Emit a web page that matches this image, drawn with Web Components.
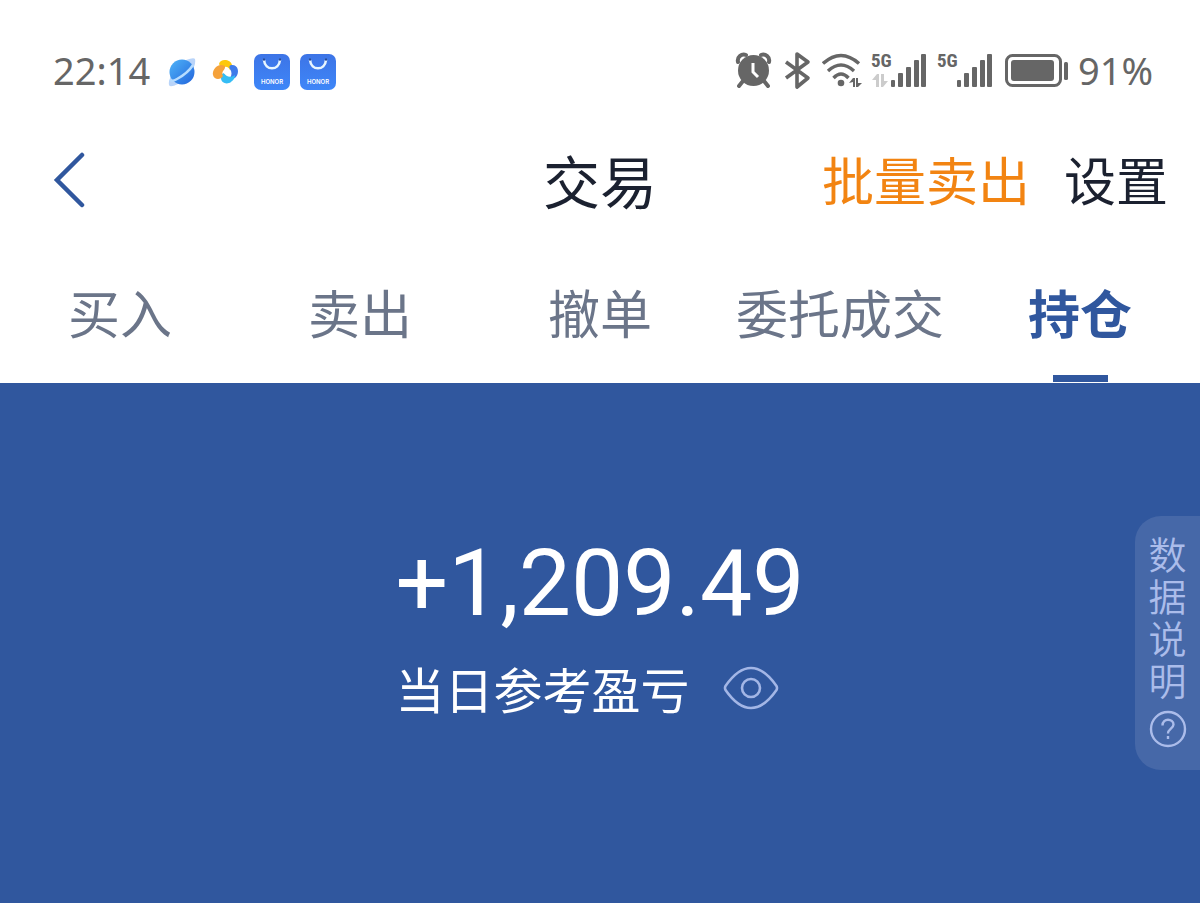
<!DOCTYPE html>
<html lang="zh-CN">
<head>
<meta charset="utf-8">
<meta name="viewport" content="width=device-width, initial-scale=1">
<title>交易</title>
<style>
  body {
    margin: 0;
    background: #fff;
    font-family: "Noto Sans CJK SC", sans-serif;
  }
</style>
</head>
<body>
<trade-page></trade-page>

<script>
class SignalBars extends HTMLElement {
  constructor() {
    super();
    this.attachShadow({ mode: "open" });
  }

  // small up/down arrows under the network label
  get arrows() {
    if (!this.hasAttribute("data")) {
      return "";
    }
    return `<path fill="#ccc" d="M1 34 6 28h2v13H5v-7zM10 28h3v7h4l-5 6h-2z"/>`;
  }

  connectedCallback() {
    this.shadowRoot.innerHTML = /* html */`
      <style>
        :host { display: block; }
        svg { display: block; }
        text { font: bold 19px "Liberation Sans Narrow", "Roboto Condensed", Roboto, sans-serif; }
      </style>
      <svg width="57" height="48" viewBox="0 0 57 48" fill="#666">
        <text x="0" y="21">5G</text>
        ${this.arrows}
        <rect x="20" y="34" width="4" height="7" rx="1"/>
        <rect x="27" y="27" width="5" height="14" rx="1"/>
        <rect x="35" y="21" width="5" height="20" rx="1"/>
        <rect x="43" y="14" width="5" height="27" rx="1"/>
        <rect x="50" y="8" width="5" height="33" rx="1"/>
      </svg>
    `;
  }
}
customElements.define("signal-bars", SignalBars);

class StoreIcon extends HTMLElement {
  constructor() {
    super();
    this.attachShadow({ mode: "open" });
  }

  connectedCallback() {
    this.shadowRoot.innerHTML = /* html */`
      <style>
        :host { display: block; }
        svg { display: block; }
        text { font: 600 6px Inter, sans-serif; }
      </style>
      <svg width="36" height="36" viewBox="0 0 36 36">
        <defs>
          <linearGradient id="bag" x1="0" y1="0" x2="0" y2="1">
            <stop offset="0" stop-color="#3d74e6"/>
            <stop offset="1" stop-color="#3e86f8"/>
          </linearGradient>
        </defs>
        <rect width="36" height="36" rx="7" fill="url(#bag)"/>
        <path d="M10 6c1 11 15 11 16 0" fill="none" stroke="#e8f6ff" stroke-width="2.600" stroke-linecap="round"/>
        <circle cx="10" cy="5.500" r="1.200" fill="#234a9c"/>
        <circle cx="26" cy="5.500" r="1.200" fill="#234a9c"/>
        <text x="18" y="30" text-anchor="middle" fill="#fff">HONOR</text>
      </svg>
    `;
  }
}
customElements.define("store-icon", StoreIcon);

class StatusBar extends HTMLElement {
  constructor() {
    super();
    this.attachShadow({ mode: "open" });
  }

  connectedCallback() {
    this.shadowRoot.innerHTML = /* html */`
      <style>
        :host {
          display: flex;
          justify-content: space-between;
          padding: 46px 47px 0 53px;
          color: #666;
          font: 38px/48px "Noto Sans", sans-serif;
        }
        .group { display: flex; align-items: center; }
        .left { gap: 10px; }
        .right { gap: 9px; }
        .apps { display: flex; align-items: center; gap: 10px; padding: 4px 0 0 6px; }
        svg { display: block; }
      </style>
      <div class="group left">
        <span>${this.getAttribute("time")}</span>
        <div class="apps">
          <svg width="32" height="32" viewBox="0 0 32 32">
            <defs>
              <linearGradient id="globe" x1="0" y1="0" x2="1" y2="1">
                <stop offset="0" stop-color="#4fb4f8"/>
                <stop offset="1" stop-color="#2264dc"/>
              </linearGradient>
            </defs>
            <path d="M20 4q8-3 9-1 1 4-2 10L12 28q-8 4-9 1-1-3 2-9z" fill="#b9d4f9"/>
            <circle cx="16" cy="16" r="12.500" fill="url(#globe)"/>
            <path d="M4 24q2 2 7-1 11-6 16-14" fill="none" stroke="#b6dcff" stroke-width="2.400"/>
          </svg>
          <svg width="36" height="32" viewBox="0 0 36 32">
            <path d="M11 8c1-6 12-5 13 1 1 2 0 4-2 5-2-4-6-4-8-1z" fill="#fdc80b"/>
            <path d="M23 9c7-1 9 7 5 12-2 2-5 2-6 1 2-3 2-6 0-9-1-2-1-3 1-4z" fill="#3f7be9"/>
            <path d="M27 19c0 4-2 5-4 7-4 3-10 1-10-4 0-3 0-4 3-5 2 4 7 5 11 2z" fill="#35bdf5"/>
            <path d="M13 9c5 0 5 3 2 6-1 2-1 4 0 5-2 4-9 4-10-1-1-4 3-10 8-10z" fill="#f5a23b"/>
            <circle cx="18" cy="16" r="2.200" fill="#fff"/>
          </svg>
          <store-icon></store-icon>
          <store-icon></store-icon>
        </div>
      </div>
      <div class="group right">
        <svg width="39" height="40" viewBox="0 0 39 40">
          <g fill="none" stroke="#666" stroke-linecap="round">
            <path d="M3 12a6 6 0 0 1 8-7M26 5a6 6 0 0 1 8 7" stroke-width="4"/>
            <path d="M8 31l-4 5M29 31l4 5" stroke-width="4"/>
          </g>
          <circle cx="18.500" cy="20.500" r="15.500" fill="#666"/>
          <path d="M18 13v9l5 5" fill="none" stroke="#fff" stroke-width="3"/>
        </svg>
        <svg width="30" height="40" viewBox="0 0 30 40">
          <path d="M3 12l22 16-11 9V4l11 8L3 28" fill="none" stroke="#666" stroke-width="3.600" stroke-linejoin="round"/>
        </svg>
        <svg width="40" height="40" viewBox="0 0 40 40">
          <g fill="none" stroke="#666" stroke-width="3.400">
            <path d="M1 13.500q18-16 36 0M6 21q13-12 26 0M11.500 28q7.500-8 15 0"/>
          </g>
          <circle cx="19" cy="33" r="3.300" fill="#666"/>
          <path d="M27 33l4-5h2v9h-2v-5zM34 28h2v5h4l-4 4h-2z" fill="#666"/>
        </svg>
        <signal-bars data></signal-bars>
        <signal-bars></signal-bars>
        <svg width="66" height="40" viewBox="0 0 66 40">
          <rect x="3.500" y="5.500" width="54" height="30" rx="6" fill="none" stroke="#666" stroke-width="3"/>
          <rect x="8" y="10" width="43" height="21" rx="3" fill="#666"/>
          <rect x="61" y="12" width="4" height="18" rx="1.500" fill="#666"/>
        </svg>
        <span>${this.getAttribute("battery")}</span>
      </div>
    `;
  }
}
customElements.define("status-bar", StatusBar);

class NavBar extends HTMLElement {
  constructor() {
    super();
    this.attachShadow({ mode: "open" });
  }

  connectedCallback() {
    this.shadowRoot.innerHTML = /* html */`
      <style>
        :host {
          display: grid;
          grid-template-columns: 1fr auto 1fr;
          align-items: center;
          padding: 43px 32px 0;
          color: #1b2130;
        }
        h1 { margin: 0; font-size: 57px; line-height: 84px; font-weight: 400; }
        button {
          display: flex;
          justify-self: start;
          padding: 0 20px;
          border: 0;
          background: none;
        }
        .actions {
          display: flex;
          justify-content: flex-end;
          gap: 34px;
          font-size: 52px;
          line-height: 84px;
        }
      </style>
      <button type="button" aria-label="返回">
        <svg width="34" height="58" viewBox="0 0 34 58" fill="none" stroke="#30579e" stroke-width="4.500" stroke-linecap="round">
          <path d="M30 5 5 30l25 25"/>
        </svg>
      </button>
      <h1><slot></slot></h1>
      <div class="actions"><slot name="action"></slot></div>
    `;
  }
}
customElements.define("nav-bar", NavBar);

class TabItem extends HTMLElement {
  constructor() {
    super();
    this.attachShadow({ mode: "open" });
  }

  connectedCallback() {
    this.shadowRoot.innerHTML = /* html */`
      <style>
        :host { display: block; flex: 1 1 0; color: #6b7589; }
        :host([active]) { color: #30579e; }
        button {
          display: flex;
          flex-direction: column;
          align-items: center;
          width: 100%;
          padding: 0;
          border: 0;
          background: none;
          color: inherit;
          font: 52px/76px "Noto Sans CJK SC", sans-serif;
          white-space: nowrap;
        }
        button::after {
          content: "";
          width: 55px;
          height: 7px;
          margin-top: 25px;
        }
        :host([active]) button { font-weight: 700; }
        :host([active]) button::after { background: #30579e; }
      </style>
      <button type="button"><slot></slot></button>
    `;
  }
}
customElements.define("tab-item", TabItem);

class TabBar extends HTMLElement {
  constructor() {
    super();
    this.attachShadow({ mode: "open" });
  }

  connectedCallback() {
    this.shadowRoot.innerHTML = /* html */`
      <style>
        :host { display: flex; padding: 53px 0 1px; }
      </style>
      <slot></slot>
    `;
  }
}
customElements.define("tab-bar", TabBar);

class DataNote extends HTMLElement {
  constructor() {
    super();
    this.attachShadow({ mode: "open" });
  }

  connectedCallback() {
    this.shadowRoot.innerHTML = /* html */`
      <style>
        :host { display: block; }
        button {
          display: flex;
          flex-direction: column;
          align-items: center;
          gap: 10px;
          width: 65px;
          padding: 16px 0 22px;
          border: 0;
          border-radius: 26px 0 0 26px;
          background: #4668a8;
          color: #abbcea;
          font: 350 38px/42px "Noto Sans CJK SC", sans-serif;
        }
        span { width: 38px; overflow-wrap: anywhere; }
        svg { display: block; }
      </style>
      <button type="button">
        <span><slot></slot></span>
        <svg width="38" height="38" viewBox="0 0 38 38" fill="none" stroke="#abbcea" stroke-width="2.400">
          <circle cx="19" cy="19" r="17"/>
          <path d="M13.500 15.500c0-8 11-7 11-1 0 4-5.500 4.500-5.500 9"/>
          <path d="M19 26v3"/>
        </svg>
      </button>
    `;
  }
}
customElements.define("data-note", DataNote);

class ProfitPanel extends HTMLElement {
  constructor() {
    super();
    this.attachShadow({ mode: "open" });
  }

  connectedCallback() {
    this.shadowRoot.innerHTML = /* html */`
      <style>
        :host {
          display: flex;
          justify-content: center;
          position: relative;
          padding: 153px 0;
          background: #30579e;
          color: #fff;
        }
        .amount { font: 93px/96px Roboto, sans-serif; }
        .label {
          display: flex;
          align-items: center;
          gap: 34px;
          margin-top: 28px;
          font-size: 49px;
          line-height: 56px;
        }
        button { display: flex; padding: 0; border: 0; background: none; }
        ::slotted(data-note) { position: absolute; top: 133px; right: 0; }
      </style>
      <div>
        <div class="amount">${this.getAttribute("amount")}</div>
        <div class="label">
          <span>${this.getAttribute("label")}</span>
          <button type="button" aria-label="隐藏金额">
            <svg width="56" height="46" viewBox="0 0 56 46" fill="none" stroke="#a3b6e6" stroke-width="2.600">
              <path d="M2.500 21Q15 3 28 3t25.500 18q1 2 0 4Q41 43 28 43T2.500 25q-1-2 0-4z"/>
              <circle cx="28" cy="23" r="9"/>
            </svg>
          </button>
        </div>
      </div>
      <slot></slot>
    `;
  }
}
customElements.define("profit-panel", ProfitPanel);

class TradePage extends HTMLElement {
  constructor() {
    super();
    this.attachShadow({ mode: "open" });
  }

  connectedCallback() {
    this.shadowRoot.innerHTML = /* html */`
      <style>
        :host {
          display: flex;
          flex-direction: column;
          box-sizing: border-box;
          min-height: 100vh;
          padding-bottom: 4px;
        }
        profit-panel { flex: 1; }
        a { color: inherit; text-decoration: none; }
        .sell { color: #f28412; }
      </style>
      <status-bar time="22:14" battery="91%"></status-bar>
      <nav-bar>
        交易
        <a class="sell" slot="action" href="#sell">批量卖出</a>
        <a slot="action" href="#settings">设置</a>
      </nav-bar>
      <tab-bar>
        <tab-item>买入</tab-item>
        <tab-item>卖出</tab-item>
        <tab-item>撤单</tab-item>
        <tab-item>委托成交</tab-item>
        <tab-item active>持仓</tab-item>
      </tab-bar>
      <profit-panel amount="+1,209.49" label="当日参考盈亏">
        <data-note>数据说明</data-note>
      </profit-panel>
    `;
  }
}
customElements.define("trade-page", TradePage);
</script>
</body>
</html>
